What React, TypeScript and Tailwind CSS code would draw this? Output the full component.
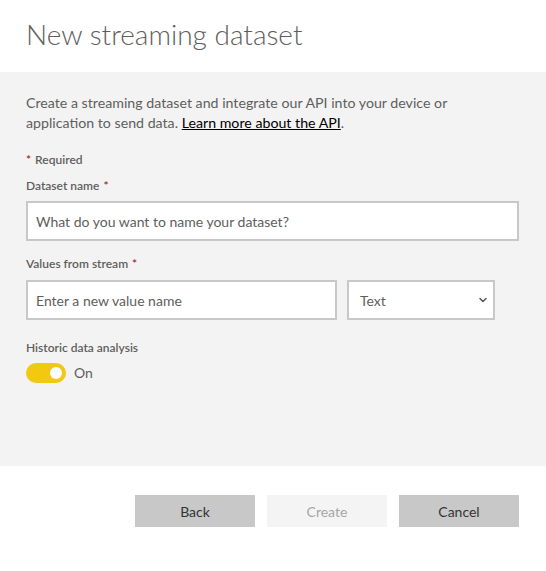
import { ChevronDown } from "lucide-react";

const font = { fontFamily: '"Segoe UI", Lato, "Noto Sans", sans-serif' };

function Label({ text, required }: { text: string; required?: boolean }) {
  return (
    <div className="h-[18px] text-[12px] font-semibold leading-[18px] text-[#605e5c]">
      {text}
      {required && <span className="ml-1 text-[#a4262c]">*</span>}
    </div>
  );
}

function Field({ placeholder, className }: { placeholder: string; className?: string }) {
  return (
    <div
      className={`flex h-[40px] items-center border-2 border-[#c8c8c8] bg-white px-[8px] text-[14px] text-[#605e5c] ${className ?? ""}`}
    >
      {placeholder}
    </div>
  );
}

export default function App() {
  return (
    <div className="flex h-[571px] w-[546px] flex-col bg-white" style={font}>
      <div className="flex h-[72px] items-center px-[26px] pb-[5px]">
        <h1 className="text-[28px] font-light leading-none text-[#605e5c]">New streaming dataset</h1>
      </div>

      <div className="flex h-[394px] flex-col bg-[#f3f3f3] px-[26px] pt-[21px]">
        <p className="w-[440px] text-[14.2px] leading-[20px] text-[#605e5c]">
          Create a streaming dataset and integrate our API into your device or application to send data.{" "}
          <span className="text-black underline">Learn more about the API</span>.
        </p>

        <div className="mt-[18px] h-[18px] text-[12px] font-semibold leading-[18px] text-[#605e5c]">
          <span className="mr-1 text-[#a4262c]">*</span>Required
        </div>
        <div className="mt-[8px]">
          <Label text="Dataset name" required />
        </div>
        <Field placeholder="What do you want to name your dataset?" className="mt-[6px] w-[493px]" />

        <div className="mt-[14px]">
          <Label text="Values from stream" required />
        </div>
        <div className="mt-[7px] flex gap-[10px]">
          <Field placeholder="Enter a new value name" className="w-[311px]" />
          <div className="flex h-[40px] w-[148px] items-center justify-between border-2 border-[#c8c8c8] bg-white pl-[11px] pr-[4px] text-[14px] text-[#605e5c]">
            <span>Text</span>
            <ChevronDown size={12} strokeWidth={3} className="text-[#555]" />
          </div>
        </div>

        <div className="mt-[19px]">
          <Label text="Historic data analysis" />
        </div>
        <div className="mt-[6px] flex items-center gap-[8px]">
          <div className="flex h-[20px] w-[40px] items-center justify-end rounded-full bg-[#f2c811] pr-[4px]">
            <div className="h-[12px] w-[12px] rounded-full bg-white" />
          </div>
          <span className="text-[14px] leading-[20px] text-[#605e5c]">On</span>
        </div>
      </div>

      <div className="flex justify-end gap-[12px] pr-[27px] pt-[29px]">
        <button className="h-[32px] w-[120px] bg-[#c8c8c8] text-[14px] text-[#333]">Back</button>
        <button className="h-[32px] w-[120px] bg-[#f4f4f4] text-[14px] text-[#a6a6a6]">Create</button>
        <button className="h-[32px] w-[120px] bg-[#c8c8c8] text-[14px] text-[#333]">Cancel</button>
      </div>
    </div>
  );
}
